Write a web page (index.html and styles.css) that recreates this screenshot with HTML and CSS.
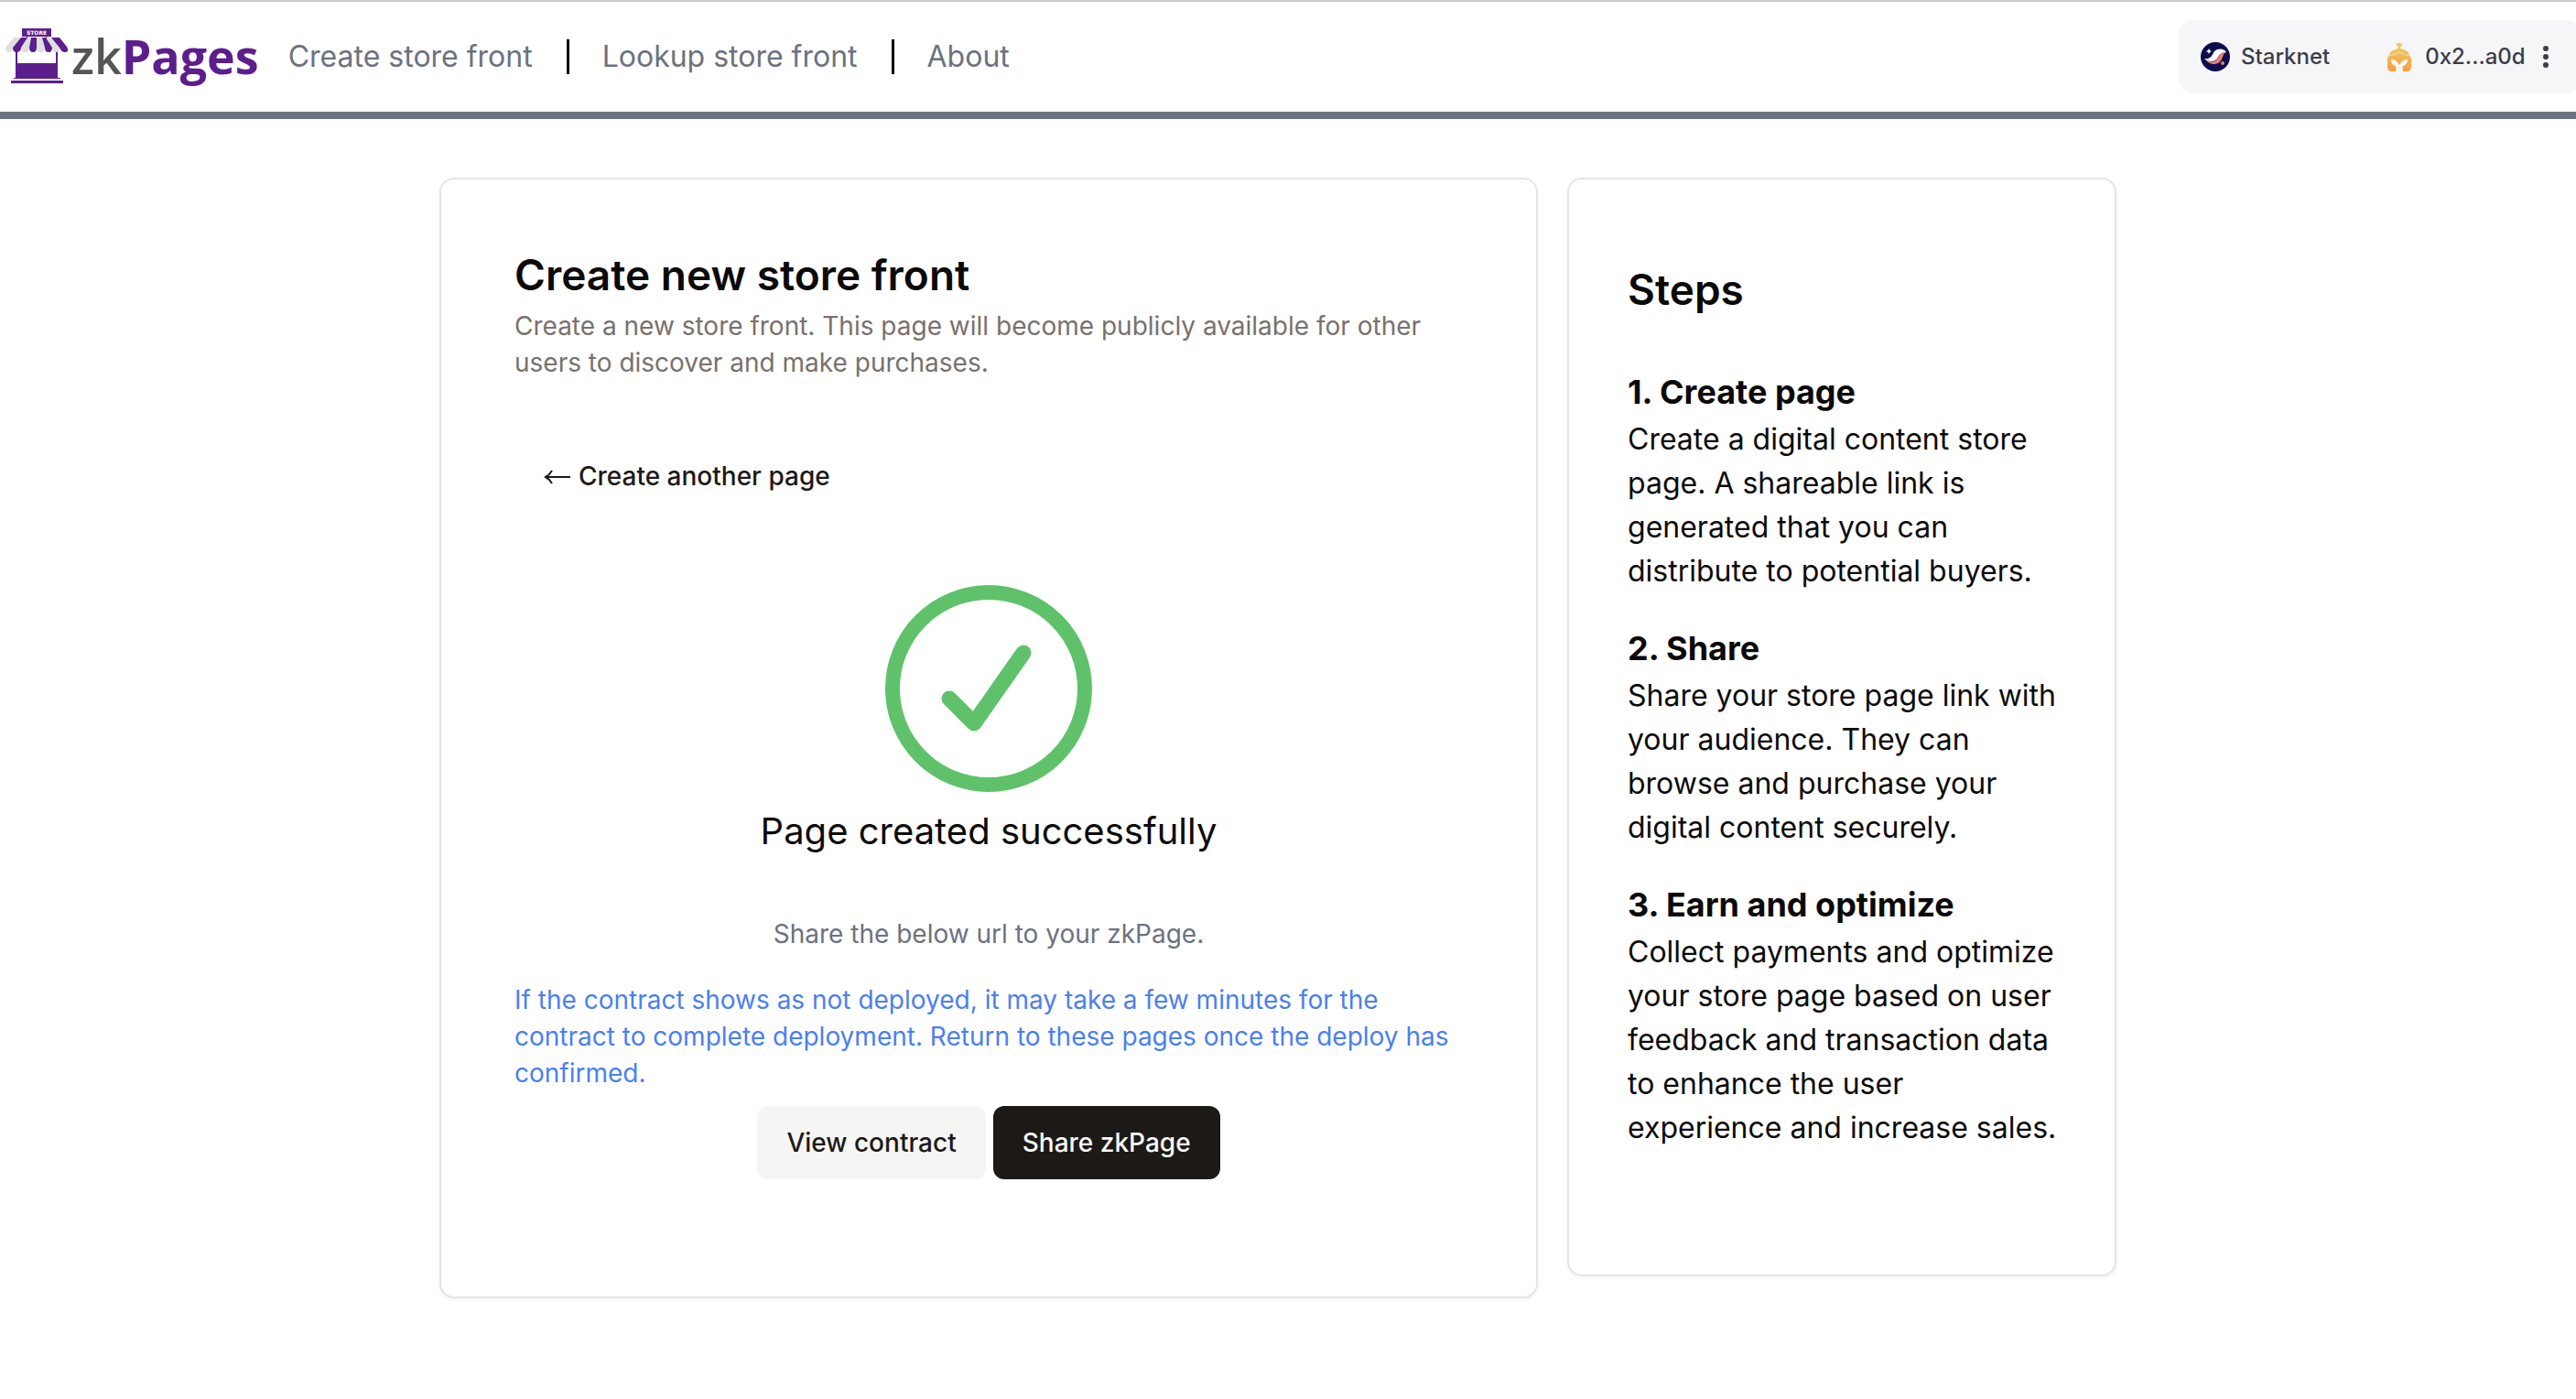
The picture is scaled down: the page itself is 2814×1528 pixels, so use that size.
FILE: index.html
```html
<!DOCTYPE html>
<html lang="en">
<head>
<meta charset="utf-8">
<meta name="viewport" content="width=device-width, initial-scale=1">
<title>zkPages</title>
<link rel="stylesheet" href="styles.css">
</head>
<body>
<header class="topbar">
  <a class="brand" href="#">
    <svg class="brand-icon" viewBox="0 0 78 64" aria-hidden="true">
      <g fill="#5c1e8c">
        <rect x="24" y="2" width="32" height="9"/>
        <rect x="29" y="10" width="1" height="3"/><rect x="50" y="10" width="1" height="3"/>
        <rect x="17" y="26" width="2" height="31"/><rect x="61" y="26" width="2" height="31"/>
        <rect x="18" y="40" width="44" height="16"/>
        <rect x="15" y="56" width="51" height="1"/>
        <rect x="12" y="59" width="57" height="3"/>
      </g>
      <g fill="#dfdfdd">
        <path d="M15 12H23L14 23Q14 28 10 28Q6 28 6 23Z"/>
        <path d="M30 12H34L32 23Q32 28 27 28Q23 28 23 23Z"/>
        <path d="M40 12H46L49 23Q49 28 44 28Q40 28 40 23Z"/>
        <path d="M50 12H58L65 23Q65 28 61 28Q57 28 57 23Z"/>
      </g>
      <g fill="#5c1e8c">
        <path d="M23 12H30L23 23Q23 28 18 28Q14 28 14 23Z"/>
        <path d="M34 12H40V23Q40 28 36 28Q32 28 32 23Z"/>
        <path d="M46 12H50L57 23Q57 28 53 28Q49 28 49 23Z"/>
        <path d="M56 12H65L73 22Q76 28 71 28Q67 28 65 23Z"/>
      </g>
      <text class="brand-sign" x="40" y="9" text-anchor="middle">STORE</text>
    </svg>
    <span class="brand-name">zk<b>Pages</b></span>
  </a>
  <nav class="nav">
    <a href="#">Create store front</a>
    <a href="#">Lookup store front</a>
    <a href="#">About</a>
  </nav>
  <div class="wallet">
    <button class="wallet-part" type="button">
      <svg class="icon" viewBox="0 0 32 32" aria-hidden="true">
        <circle cx="16" cy="16" r="16" fill="#0c0c4f"/>
        <path fill="#e58271" d="M28 11C23 11 21 13 19 17C15 23 10 22 5 19C8 23 12 24 15 24C20 24 23 20 24 16C25 13 26 12 28 11Z"/>
        <path fill="#fff" d="M28 11C26 7 19 6 15 10C12 14 12 19 4 18C8 22 15 22 18 18C21 13 22 11 28 11Z"/>
        <path fill="#fff" d="M9 7L10 9L12 10L10 11L9 13L8 11L6 10L8 9Z"/>
        <circle cx="24" cy="23" r="2" fill="#e58271"/>
      </svg>
      Starknet
    </button>
    <button class="wallet-part" type="button">
      <svg class="icon" viewBox="0 0 32 32" aria-hidden="true">
        <defs><linearGradient id="gold" x1="0" y1="0" x2="0" y2="1"><stop offset="0" stop-color="#efcf68"/><stop offset="1" stop-color="#f5a040"/></linearGradient></defs>
        <path fill="url(#gold)" d="M12 2L15 1Q16 0 17 1L20 2L17 6V7C23 8 27 11 28 16L29 18V28Q28 32 25 32H20Q19 30 20 26C23 25 25 23 25 19C21 19 19 20 16 25C13 20 11 19 7 19C7 23 9 25 12 26Q13 30 12 32H7Q4 32 3 28V18L4 16C5 11 9 8 15 7V6Z"/>
        <path fill="none" stroke="#f9e9c0" d="M4 15L12 13L16 11L20 13L28 15"/>
      </svg>
      0x2...a0d
    </button>
    <button class="more" type="button" aria-label="More options"><svg viewBox="0 0 8 24"><g fill="#3b3d4a"><circle cx="4" cy="3" r="3"/><circle cx="4" cy="12" r="3"/><circle cx="4" cy="21" r="3"/></g></svg></button>
  </div>
</header>
<main class="layout">
  <section class="card create">
    <h1 class="title">Create new store front</h1>
    <p class="description">Create a new store front. This page will become publicly available for other users to discover and make purchases.</p>
    <button class="btn btn-ghost" type="button">
      <svg class="arrow" viewBox="0 0 30 20" aria-hidden="true"><path d="M29 11H2M9 4Q6 9 2 11Q6 13 9 18" fill="none" stroke="#1c1917" stroke-width="2"/></svg>
      Create another page
    </button>
    <div class="result">
      <svg class="check" viewBox="0 0 240 240" aria-hidden="true">
        <g fill="none" stroke="#5fc26a"><circle cx="120" cy="120" r="105" stroke-width="16"/><path d="M77 131l27 27 54-77" stroke-width="17" stroke-linecap="round" stroke-linejoin="round"/></g>
      </svg>
      <h2 class="result-title">Page created successfully</h2>
      <p class="hint">Share the below url to your zkPage.</p>
      <p class="notice">If the contract shows as not deployed, it may take a few minutes for the contract to complete deployment. Return to these pages once the deploy has confirmed.</p>
      <div class="actions">
        <button class="btn btn-secondary" type="button">View contract</button>
        <button class="btn btn-primary" type="button">Share zkPage</button>
      </div>
    </div>
  </section>
  <aside class="card steps">
    <h2 class="title">Steps</h2>
    <section class="step">
      <h3>1. Create page</h3>
      <p>Create a digital content store page. A shareable link is generated that you can distribute to potential buyers.</p>
    </section>
    <section class="step">
      <h3>2. Share</h3>
      <p>Share your store page link with your audience. They can browse and purchase your digital content securely.</p>
    </section>
    <section class="step">
      <h3>3. Earn and optimize</h3>
      <p>Collect payments and optimize your store page based on user feedback and transaction data to enhance the user experience and increase sales.</p>
    </section>
  </aside>
</main>
</body>
</html>
```
FILE: styles.css
```css
*, *::before, *::after { box-sizing: border-box; }
body {
  margin: 0;
  background: #fff;
  color: #0c0a09;
  font-family: Inter, "Liberation Sans", sans-serif;
  font-size: 28px;
  line-height: 40px;
}
h1, h2, h3, p { margin: 0; }
a { color: inherit; text-decoration: none; }
button { font: inherit; color: inherit; border: 0; background: none; padding: 0; cursor: pointer; }

.topbar {
  display: flex;
  align-items: center;
  min-height: 130px;
  border-top: 2px solid #ccc;
  border-bottom: 8px solid #6b7280;
  overflow: hidden;
}
.brand { display: flex; align-items: center; padding-bottom: 2px; }
.brand-icon { width: 78px; height: 64px; }
.brand-sign { font: 700 6px "DejaVu Sans", sans-serif; fill: #fff; }
.brand-name {
  color: #555;
  font: 600 52px/64px "Open Sans", sans-serif;
}
.brand-name b { color: #5c1e8c; font-weight: 700; }
.nav { display: flex; margin-left: 32px; font-size: 32px; color: #6b7280; }
.nav a { display: flex; align-items: center; }
.nav a + a::before {
  content: "";
  width: 3px;
  height: 38px;
  margin: 0 36px 0 37px;
  background: #000;
}

.wallet {
  display: flex;
  align-items: center;
  flex: none;
  width: 440px;
  height: 80px;
  margin-left: auto;
  margin-right: -6px;
  padding-left: 24px;
  border-radius: 16px;
  background: #f6f6f9;
  color: #3b3d4a;
  font-size: 24px;
  font-weight: 500;
}
.wallet-part { display: flex; align-items: center; gap: 12px; }
.wallet-part + .wallet-part { margin-left: 60px; }
.icon { width: 32px; height: 32px; }
.more { margin-left: 18px; display: flex; }
.more svg { width: 8px; height: 24px; }

.layout {
  display: grid;
  grid-template-columns: 2fr 1fr;
  align-items: start;
  gap: 32px;
  width: 100%;
  max-width: 1854px;
  margin: 64px auto;
  padding-right: 22px;
}
.card {
  border: 2px solid #e5e5e5;
  border-radius: 16px;
  background: #fff;
  box-shadow: 0 2px 4px rgba(0, 0, 0, .05);
}
.title { font-size: 46px; line-height: 48px; font-weight: 600; }

.create { padding: 80px 80px 128px; }
.description { margin-top: 12px; color: #78716c; }
.btn {
  height: 80px;
  padding: 0 32px;
  border-radius: 12px;
  font-weight: 500;
  white-space: nowrap;
}
.btn-ghost { display: flex; align-items: center; gap: 8px; margin-top: 64px; color: #1c1917; }
.arrow { width: 30px; height: 20px; }
.btn-secondary { background: #f5f5f4; color: #1c1917; }
.btn-primary { background: #1c1917; color: #fafaf9; }
.result { display: flex; flex-direction: column; align-items: center; }
.check { width: 240px; height: 240px; margin: 72px 0 8px; }
.result-title { font-size: 40px; line-height: 56px; font-weight: 400; }
.hint { margin-top: 64px; color: #6b7280; }
.notice { margin-top: 32px; color: #4a80ee; }
.actions { display: flex; gap: 8px; margin-top: 16px; }

.steps { padding: 96px 56px 136px 64px; }
.steps .title { margin-bottom: 60px; }
.step + .step { margin-top: 32px; }
.step h3 { font-size: 36px; line-height: 56px; font-weight: 700; }
.step p { font-size: 32px; line-height: 48px; }
```
